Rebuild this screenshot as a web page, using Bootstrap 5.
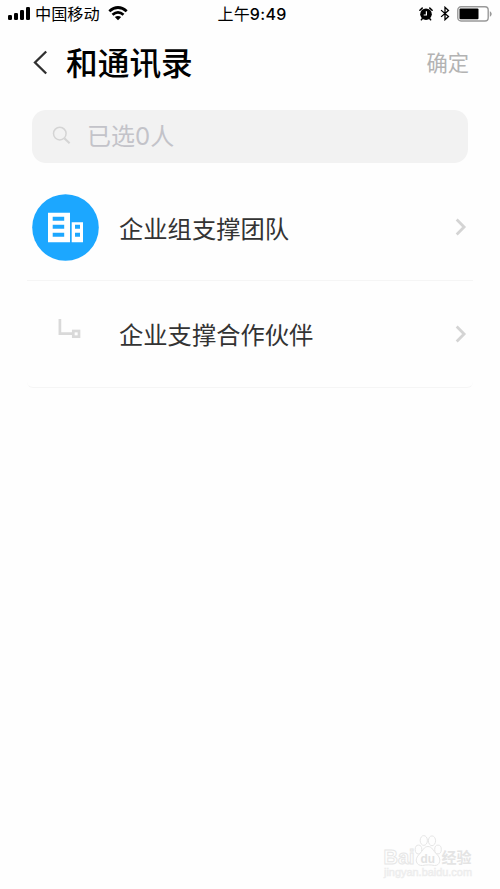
<!DOCTYPE html>
<html lang="zh-CN">
<head>
<meta charset="utf-8">
<meta name="viewport" content="width=device-width, initial-scale=1">
<title>和通讯录</title>
<link href="https://cdn.jsdelivr.net/npm/bootstrap@5.3.0/dist/css/bootstrap.min.css" rel="stylesheet">
<style>
body{font-family:"Inter","Noto Sans CJK SC",sans-serif;background:#fefefe;color:#000;height:889px;overflow:hidden}
svg{display:block;flex:none}
.status-bar{height:27px;line-height:27px;padding:0 8px 0 8px;font-size:16px}
.carrier{margin-left:5px;font-size:16.2px;padding-top:1px}
.clock{left:217.5px;top:1px;font-size:16px;font-weight:400;letter-spacing:.15px}
.clock-digits{font-weight:500;letter-spacing:.35px}
.status-icons{gap:7px}
.page-head{height:82.5px;padding:0 31px 11px 33px}
.page-title{font-size:31.7px;line-height:48px;font-weight:500;margin-left:18px;padding-top:3px}
.confirm{font-size:21.3px;font-weight:400;color:#b3b3b3;padding-top:2px}
.search-box{height:53px;margin:0 32px;padding-left:20px;border-radius:14px;background:#f2f2f2}
.search-icon{margin-bottom:1px}
.search-text{margin-left:16px;font-size:24px;font-weight:400;color:#c3c3c9;padding-top:1px}
.contacts{margin:12px 27px 0}
.contact.list-group-item{height:106.6px;border:0;border-bottom:1px solid #f5f5f5;padding:0 5px;background:transparent}
.contact-name{margin-left:20px;padding-top:1px;font-size:24.3px;color:#333;font-family:"Noto Sans CJK SC",sans-serif}
.watermark{right:20px;bottom:5px;width:100px;height:52px}
</style>
</head>
<body class="position-relative">
<header class="status-bar d-flex align-items-center position-relative">
  <svg width="22" height="13" viewBox="0 0 22 13"><rect y="8" width="4" height="5" rx="1.3"/><rect x="6" y="6" width="4" height="7" rx="1.3"/><rect x="12" y="3" width="4" height="10" rx="1.3"/><rect x="18" width="4" height="13" rx="1.3"/></svg>
  <span class="carrier">中国移动</span>
  <svg class="ms-2" width="20" height="15" viewBox="0 0 20 15" fill="none" stroke="#000" stroke-width="2.8"><path d="M1.3 5.3Q10-2.3 18.7 5.3M4.5 8.8Q10 4 15.5 8.8"/><path d="M10 14.3 6.8 11.1Q10 8.8 13.2 11.1Z" fill="#000" stroke="none"/></svg>
  <span class="clock position-absolute">上午<span class="clock-digits">9:49</span></span>
  <div class="status-icons d-flex align-items-center ms-auto">
    <svg width="14" height="14" viewBox="0 0 14 14"><circle cx="7" cy="7.2" r="5.8"/><path d="M.9 3.2 3.2 1.1M13.1 3.2 10.8 1.1M3.2 11.8l-.8 1M10.8 11.8l.8 1" stroke="#000" stroke-width="1.5" stroke-linecap="round"/><path d="M7.4 4.2V8H4.7" fill="none" stroke="#fff" stroke-width="1.2"/></svg>
    <svg width="10" height="15" viewBox="0 0 10 16" fill="none" stroke="#000" stroke-width="1.4"><path d="M.8 4.4 8.7 11.2 5 14.6V1.4L8.7 4.8.8 11.6"/></svg>
    <svg width="35" height="16" viewBox="0 0 35 16"><rect x=".8" y=".8" width="30.4" height="14.2" rx="3.2" fill="#fff" stroke="#999" stroke-width="1.4"/><rect x="2.5" y="2.6" width="19" height="10.7" rx="1"/><path d="M32.800 5.200c2.500 1 2.500 4.500 0 5.500z" fill="#999"/></svg>
  </div>
</header>
<nav class="page-head d-flex align-items-center">
  <svg width="15" height="25" viewBox="0 0 15 25" fill="none" stroke="#303030" stroke-width="2.3"><path d="M13.2 1.500 2 12.500 13.200 23.500"/></svg>
  <h1 class="page-title mb-0">和通讯录</h1>
  <span class="confirm ms-auto">确定</span>
</nav>
<div class="search-box d-flex align-items-center">
  <svg class="search-icon" width="19" height="19" viewBox="0 0 19 19" fill="none" stroke="#d4d4d4"><circle cx="7.800" cy="7.600" r="6.300" stroke-width="1.500"/><path d="m12.300 12.200 5.300 5" stroke-width="2.100"/></svg>
  <span class="search-text">已选0人</span>
</div>
<main class="contacts list-group">
  <div class="contact list-group-item d-flex align-items-center">
    <svg width="67" height="67" viewBox="0 0 67 67"><circle cx="33.500" cy="33.500" r="33.300" fill="#1ca7ff"/><path fill="#fff" fill-rule="evenodd" d="M16 18.800h22v29.500H16zM20.700 22.800v4h11.500v-4zM20.700 30.800v4h11.500v-4zM20.700 38.800v4h11.500v-4zM39.700 28.200h11.300v20.100H39.700zM43 30.800v4h5v-4zM43 38.800v4h5v-4z"/></svg>
    <span class="contact-name">企业组支撑团队</span>
    <svg class="ms-auto" width="13" height="18" viewBox="0 0 13 18" fill="none" stroke="#d4d4d4" stroke-width="2.800"><path d="m1.700 1.500 7.400 7.500-7.400 7.500"/></svg>
  </div>
  <div class="contact list-group-item d-flex align-items-center">
    <svg width="67" height="67" viewBox="0 0 67 67" fill="none" stroke="#d9d9d9" stroke-width="2.700"><path d="M27.900 19v14.700h13"/><rect x="41.300" y="31" width="5.700" height="5.700"/></svg>
    <span class="contact-name">企业支撑合作伙伴</span>
    <svg class="ms-auto" width="13" height="18" viewBox="0 0 13 18" fill="none" stroke="#d4d4d4" stroke-width="2.800"><path d="m1.700 1.500 7.400 7.500-7.400 7.500"/></svg>
  </div>
</main>
<svg class="watermark position-absolute" viewBox="0 0 100 52" fill="#fefefe" stroke="#e6e6e6" stroke-width="1">
  <text x="3.500" y="31.500" font-family="Liberation Sans,sans-serif" font-weight="700" font-size="21" textLength="31" lengthAdjust="spacingAndGlyphs">Bai</text>
  <ellipse cx="38.500" cy="17.500" rx="3.300" ry="4.400"/><ellipse cx="43.800" cy="8.500" rx="3.600" ry="4.900"/><ellipse cx="52" cy="8.800" rx="3.600" ry="4.900"/><ellipse cx="58" cy="17.500" rx="3.300" ry="4.400"/>
  <path d="M48 14.500c4 0 5 4 8.500 7.500c6 5 3 12-2 11.500c-4-.8-8-.8-12 0c-6 .5-9-6-3-11.500C43 18.500 44 14.500 48 14.500Z"/>
  <text x="40.500" y="31" font-family="Liberation Sans,sans-serif" font-weight="700" font-size="13" textLength="14.500" fill="#e2e2e2" stroke="none" lengthAdjust="spacingAndGlyphs">du</text>
  <text x="61.500" y="30.500" font-family="Noto Sans CJK SC,sans-serif" font-weight="700" font-size="15" textLength="30" fill="#e4e4e4" stroke="none">经验</text>
  <text x="4" y="43.500" font-family="Liberation Sans,sans-serif" font-size="10.500" textLength="88" fill="#f2f2f2" stroke="#ececec" stroke-width=".5" lengthAdjust="spacingAndGlyphs">jingyan.baidu.com</text>
</svg>
<script src="https://cdn.jsdelivr.net/npm/bootstrap@5.3.0/dist/js/bootstrap.bundle.min.js"></script>
</body>
</html>
